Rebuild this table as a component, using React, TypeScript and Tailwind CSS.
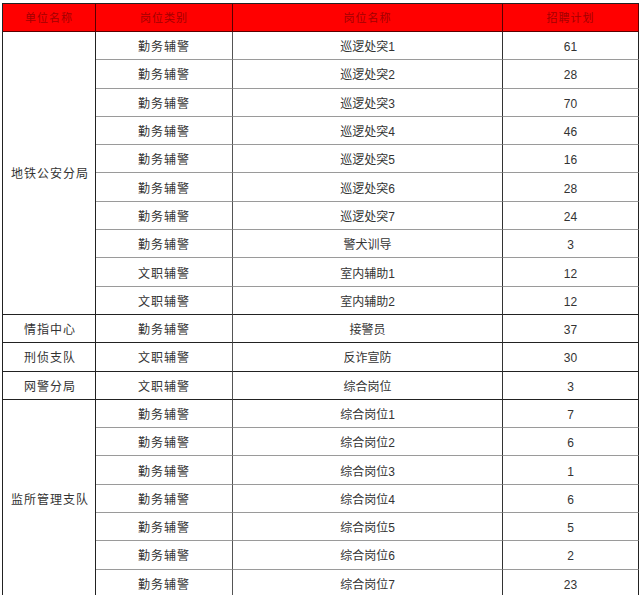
const rows: { cat: string; name: string; plan: number }[] = [
  { cat: "勤务辅警", name: "巡逻处突1", plan: 61 },
  { cat: "勤务辅警", name: "巡逻处突2", plan: 28 },
  { cat: "勤务辅警", name: "巡逻处突3", plan: 70 },
  { cat: "勤务辅警", name: "巡逻处突4", plan: 46 },
  { cat: "勤务辅警", name: "巡逻处突5", plan: 16 },
  { cat: "勤务辅警", name: "巡逻处突6", plan: 28 },
  { cat: "勤务辅警", name: "巡逻处突7", plan: 24 },
  { cat: "勤务辅警", name: "警犬训导", plan: 3 },
  { cat: "文职辅警", name: "室内辅助1", plan: 12 },
  { cat: "文职辅警", name: "室内辅助2", plan: 12 },
  { cat: "勤务辅警", name: "接警员", plan: 37 },
  { cat: "文职辅警", name: "反诈宣防", plan: 30 },
  { cat: "文职辅警", name: "综合岗位", plan: 3 },
  { cat: "勤务辅警", name: "综合岗位1", plan: 7 },
  { cat: "勤务辅警", name: "综合岗位2", plan: 6 },
  { cat: "勤务辅警", name: "综合岗位3", plan: 1 },
  { cat: "勤务辅警", name: "综合岗位4", plan: 6 },
  { cat: "勤务辅警", name: "综合岗位5", plan: 5 },
  { cat: "勤务辅警", name: "综合岗位6", plan: 2 },
  { cat: "勤务辅警", name: "综合岗位7", plan: 23 },
];

// unit name, first row index, row count
const units: { name: string; start: number; span: number }[] = [
  { name: "地铁公安分局", start: 0, span: 10 },
  { name: "情指中心", start: 10, span: 1 },
  { name: "刑侦支队", start: 11, span: 1 },
  { name: "网警分局", start: 12, span: 1 },
  { name: "监所管理支队", start: 13, span: 7 },
];

const groupEnds = new Set(units.map((u) => u.start + u.span - 1));

export default function App() {
  return (
    <div
      className="min-h-screen bg-white pl-[2px] pt-[3px] text-[12px] text-[#333]"
      style={{ fontFamily: '"Liberation Sans", "Noto Sans CJK SC", sans-serif' }}
    >
      <table className="w-[636px] table-fixed border-separate border-spacing-0 border-l border-t border-[#222]">
        <colgroup>
          <col className="w-[93px]" />
          <col className="w-[137px]" />
          <col className="w-[270px]" />
          <col className="w-[136px]" />
        </colgroup>
        <thead>
          <tr className="h-[28px]">
            {["单位名称", "岗位类别", "岗位名称", "招聘计划"].map((h) => (
              <th
                key={h}
                className="border-b border-r border-[#5a0000] bg-[#ff0000] p-0 pt-[1px] text-center text-[11px] font-normal tracking-[1px] text-[#a30000]"
              >
                {h}
              </th>
            ))}
          </tr>
        </thead>
        <tbody>
          {rows.map((r, i) => {
            const unit = units.find((u) => u.start === i);
            const rowLine = groupEnds.has(i) ? "border-b-[#222]" : "border-b-[#9a9a9a]";
            return (
              <tr key={i} className="h-[28.3px]">
                {unit && (
                  <td
                    rowSpan={unit.span}
                    className="border-b border-r border-[#222] p-0 pt-[3px] pl-[2px] text-center text-[12px] tracking-[1px]"
                  >
                    {unit.name}
                  </td>
                )}
                <td className={`border-b border-r border-r-[#555] p-0 pt-[3px] text-center tracking-[1px] ${rowLine}`}>
                  {r.cat}
                </td>
                <td className={`border-b border-r border-r-[#333] p-0 pt-[3px] text-center ${rowLine}`}>
                  {r.name}
                </td>
                <td className={`border-b border-r border-r-[#222] p-0 pt-[3px] text-center ${rowLine}`}>
                  {r.plan}
                </td>
              </tr>
            );
          })}
        </tbody>
      </table>
    </div>
  );
}
